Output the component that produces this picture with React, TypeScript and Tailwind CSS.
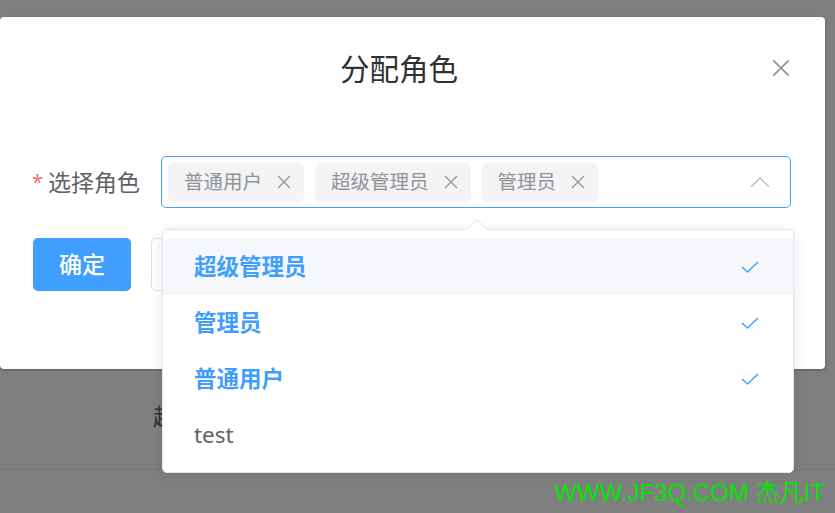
import { ReactNode } from 'react';

const CJK = "font-['Noto_Sans','Noto_Sans_CJK_SC',sans-serif]";

function CloseIcon({ className }: { className?: string }) {
  return (
    <svg viewBox="0 0 14 14" className={className} fill="none" stroke="currentColor" strokeWidth="1.3">
      <path d="M1 1L13 13M13 1L1 13" />
    </svg>
  );
}

function Tag({ children }: { children: ReactNode }) {
  return (
    <span className="flex h-[39px] shrink-0 items-center gap-[15px] whitespace-nowrap rounded-[5px] bg-[#f4f4f5] pl-[16px] pr-[13px] text-[19.5px] leading-none text-[#909399]">
      {children}
      <CloseIcon className="h-[14px] w-[14px] text-[#909399]" />
    </span>
  );
}

const options = [
  { label: '超级管理员', selected: true, hover: true },
  { label: '管理员', selected: true, hover: false },
  { label: '普通用户', selected: true, hover: false },
  { label: 'test', selected: false, hover: false },
];

export default function App() {
  return (
    <div className={`relative h-[513px] w-[835px] overflow-hidden bg-white ${CJK}`}>
      {/* page behind the mask */}
      <div className="pt-[398px]">
        <div className="h-[72px] border-b border-[#ebeef5] pl-[153px] text-[23px] leading-[36px] text-[#606266]">
          超
        </div>
      </div>

      <div className="absolute inset-0 bg-black/50" />

      {/* dialog */}
      <div className="absolute left-0 top-[17px] h-[352px] w-[825px] rounded-[4px] bg-white shadow-[0_1px_3px_rgba(0,0,0,0.3)]">
        <div className="relative pl-[33px] pr-[60px] pt-[32px]">
          <h2 className="text-center text-[29.5px] leading-[40px] text-[#303133]">分配角色</h2>
          <button className="absolute right-[35px] top-[42px] text-[#909399]">
            <CloseIcon className="h-[18px] w-[18px]" />
          </button>
        </div>

        <div className="px-[33px] pt-[67px]">
          <div className="flex items-center">
            <label className="flex w-[128px] shrink-0 items-center justify-end whitespace-nowrap pr-[21px] text-[23px] leading-[52px] text-[#606266]">
              <span className="mr-[5px] text-[20px] text-[#f56c6c]">*</span>
              选择角色
            </label>
            <div className="flex h-[52px] w-[630px] shrink-0 items-center gap-[11px] rounded-[5px] border border-[#409eff] pl-[6px]">
              <Tag>普通用户</Tag>
              <Tag>超级管理员</Tag>
              <Tag>管理员</Tag>
              <svg viewBox="0 0 20 11" className="ml-auto mr-[20px] h-[11px] w-[20px]" fill="none" stroke="#c0c4cc" strokeWidth="1.5">
                <path d="M1 10L10 1L19 10" />
              </svg>
            </div>
          </div>

          <div className="mt-[30px] flex gap-[20px]">
            <button className="h-[53px] w-[98px] rounded-[5px] bg-[#409eff] text-[23px] font-medium text-white">确定</button>
            <button className="h-[53px] w-[98px] rounded-[5px] border border-[#dcdfe6] bg-white text-[23px] text-[#606266]">
              <span className="invisible">取消</span>
            </button>
          </div>
        </div>
      </div>

      {/* dropdown */}
      <div className="absolute left-[162px] top-[229px] w-[632px] rounded-[5px] border border-[#e4e7ed] bg-white py-[9px] shadow-[0_2px_12px_rgba(0,0,0,0.1)]">
        <div className="absolute left-[307px] top-[-8px] h-[14px] w-[14px] rotate-45 border-l border-t border-[#e4e7ed] bg-white" />
        {options.map((o) => (
          <div
            key={o.label}
            className={`flex h-[56px] items-center justify-between pl-[31px] pr-[34px] text-[22.5px] ${
              o.hover ? 'bg-[#f5f7fa]' : ''
            } ${o.selected ? 'font-bold text-[#409eff]' : 'text-[#606266]'}`}
          >
            <span>{o.label}</span>
            {o.selected && (
              <svg viewBox="0 0 18 12" className="h-[12px] w-[18px]" fill="none" stroke="#409eff" strokeWidth="1.4">
                <path d="M1 6L6.5 11L17 1" />
              </svg>
            )}
          </div>
        ))}
      </div>

      <div className="absolute right-[10px] top-[478px] font-['Liberation_Sans','Noto_Sans_CJK_SC',sans-serif] text-[24px] leading-[30px] text-[#00e600]">
        WWW.JF3Q.COM 杰凡IT
      </div>
    </div>
  );
}
